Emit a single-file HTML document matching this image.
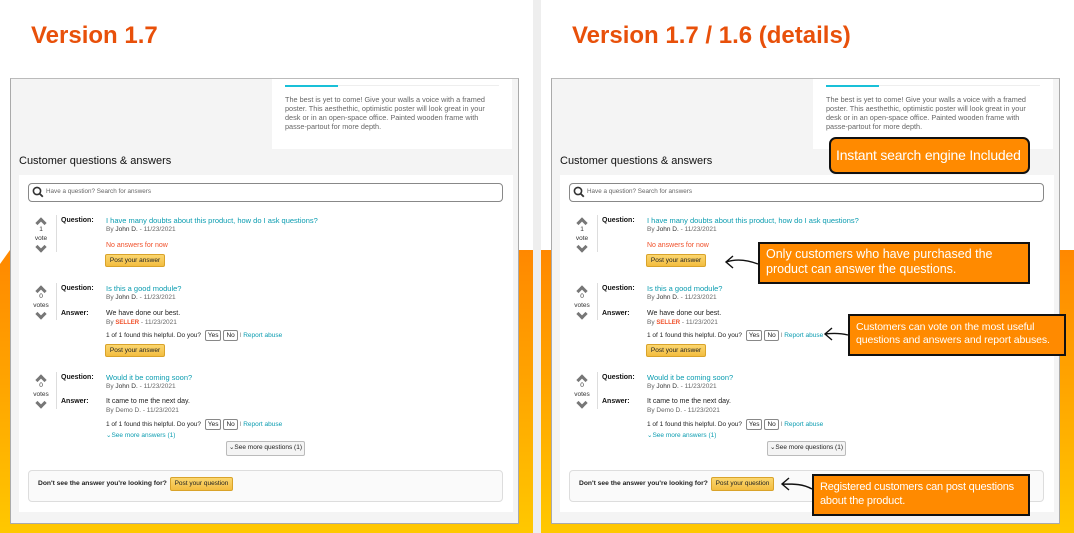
<!DOCTYPE html>
<html><head><meta charset="utf-8"><style>
*{margin:0;padding:0;box-sizing:border-box}
body{width:1074px;height:533px;position:relative;overflow:hidden;background:#fff;font-family:"Liberation Sans",sans-serif}
.a{position:absolute;white-space:nowrap}
.bg{position:absolute;top:250px;height:283px;background:linear-gradient(#ff8800,#ffa600 50%,#ffc800)}
.panel{position:absolute;top:0;left:0;width:533px;height:533px}
.t{font-size:7px;line-height:10px;color:#222}
.lab{font-size:7px;font-weight:bold;color:#111;line-height:10px}
.lnk{color:#0a9cb0;font-size:7.5px;line-height:10px}
.by{font-size:6.5px;color:#666;line-height:10px}
.btn{position:absolute;background:linear-gradient(#fbd66f,#f3bd40);border:1px solid #d9a32a;border-radius:2px;font-size:6.5px;color:#222;text-align:center;line-height:11px}
.yn{display:inline-block;border:1px solid #888;border-radius:2px;padding:0 2px;font-size:6.5px;line-height:9px;margin-left:2px;background:#fff}
.chev{position:absolute;width:8px;height:8px;border-left:3px solid #777;border-top:3px solid #777}
.vn{font-size:6.5px;color:#333;text-align:center;width:30px;line-height:9px}
.note{position:absolute;background:#ff8a00;border:2.5px solid #111;color:#fff;font-size:12px;line-height:15px;padding:3px 6px;white-space:nowrap;overflow:hidden}
</style></head><body>
<div class="bg" style="left:0;width:533px"></div>
<div class="bg" style="left:541px;width:533px"></div>
<div class="a" style="left:533px;top:0;width:8px;height:533px;background:#eee"></div>
<div class="a" style="left:0;top:250px;width:0;height:0;border-top:14px solid #fff;border-right:10px solid transparent"></div>

<div class="a" style="left:31px;top:22px;font-size:24px;font-weight:bold;color:#e8500a">Version 1.7</div>
<div class="a" style="left:572px;top:22px;font-size:24px;font-weight:bold;color:#e8500a">Version 1.7 / 1.6 (details)</div>

<div id="p1" class="panel">
<div class="a" style="left:10px;top:78px;width:509px;height:446px;background:#f4f4f4;border:1.5px solid #aaa;border-top:1.5px solid #bbb"></div>
<div class="a" style="left:272px;top:79px;width:240px;height:70px;background:#fff"></div>
<div class="a" style="left:285px;top:85px;width:214px;height:1px;background:#eee"></div>
<div class="a" style="left:285px;top:85px;width:53px;height:2px;background:#19c0d8"></div>
<div class="a" style="left:285px;top:95px;font-size:7.3px;line-height:9px;color:#666">The best is yet to come! Give your walls a voice with a framed<br>poster. This aesthethic, optimistic poster will look great in your<br>desk or in an open-space office. Painted wooden frame with<br>passe-partout for more depth.</div>
<div class="a" style="left:19px;top:155px;font-size:11px;color:#111">Customer questions &amp; answers</div>
<div class="a" style="left:19px;top:175px;width:494px;height:337px;background:#fff"></div>
<div class="a" style="left:28px;top:183px;width:475px;height:19px;border:1.5px solid #888;border-radius:4px"></div>
<svg class="a" style="left:32px;top:186px" width="12" height="12" viewBox="0 0 12 12"><circle cx="5" cy="5" r="3.6" fill="none" stroke="#333" stroke-width="1.6"/><path d="M7.6 7.6L10.8 10.8" stroke="#333" stroke-width="1.8"/></svg>
<div class="a" style="left:46px;top:187px;font-size:6.3px;color:#666;line-height:10px">Have a question? Search for answers</div>

<div class="chev" style="left:37px;top:219px;transform:rotate(45deg)"></div>
<div class="a vn" style="left:26px;top:225px">1</div>
<div class="a vn" style="left:26px;top:234px">vote</div>
<div class="chev" style="left:37px;top:243px;transform:rotate(225deg)"></div>
<div class="a" style="left:56px;top:215px;width:1px;height:37px;background:#ddd"></div>
<div class="a lab" style="left:61px;top:216px">Question:</div>
<div class="a lnk" style="left:106px;top:216px">I have many doubts about this product, how do I ask questions?</div>
<div class="a by" style="left:106px;top:225px">By <span style="color:#333">John D.</span> - 11/23/2021</div>
<div class="a" style="left:106px;top:241px;font-size:7px;color:#f0502a;line-height:10px">No answers for now</div>
<div class="btn" style="left:105px;top:254px;width:60px;height:13px">Post your answer</div>

<div class="chev" style="left:37px;top:287px;transform:rotate(45deg)"></div>
<div class="a vn" style="left:26px;top:292px">0</div>
<div class="a vn" style="left:26px;top:301px">votes</div>
<div class="chev" style="left:37px;top:310px;transform:rotate(225deg)"></div>
<div class="a" style="left:56px;top:283px;width:1px;height:37px;background:#ddd"></div>
<div class="a lab" style="left:61px;top:284px">Question:</div>
<div class="a lnk" style="left:106px;top:284px">Is this a good module?</div>
<div class="a by" style="left:106px;top:293px">By <span style="color:#333">John D.</span> - 11/23/2021</div>
<div class="a lab" style="left:61px;top:309px">Answer:</div>
<div class="a t" style="left:106px;top:309px">We have done our best.</div>
<div class="a by" style="left:106px;top:318px">By <b style="color:#f0502a;font-size:6px">SELLER</b> - 11/23/2021</div>
<div class="a t" style="left:106px;top:330px;font-size:6.5px">1 of 1 found this helpful. Do you? <span class="yn">Yes</span><span class="yn">No</span> <span style="color:#888">I</span> <span class="lnk" style="font-size:6.5px">Report abuse</span></div>
<div class="btn" style="left:105px;top:344px;width:60px;height:13px">Post your answer</div>

<div class="chev" style="left:37px;top:376px;transform:rotate(45deg)"></div>
<div class="a vn" style="left:26px;top:381px">0</div>
<div class="a vn" style="left:26px;top:390px">votes</div>
<div class="chev" style="left:37px;top:399px;transform:rotate(225deg)"></div>
<div class="a" style="left:56px;top:372px;width:1px;height:37px;background:#ddd"></div>
<div class="a lab" style="left:61px;top:373px">Question:</div>
<div class="a lnk" style="left:106px;top:373px">Would it be coming soon?</div>
<div class="a by" style="left:106px;top:382px">By <span style="color:#333">John D.</span> - 11/23/2021</div>
<div class="a lab" style="left:61px;top:397px">Answer:</div>
<div class="a t" style="left:106px;top:397px">It came to me the next day.</div>
<div class="a by" style="left:106px;top:406px">By Demo D. - 11/23/2021</div>
<div class="a t" style="left:106px;top:419px;font-size:6.5px">1 of 1 found this helpful. Do you? <span class="yn">Yes</span><span class="yn">No</span> <span style="color:#888">I</span> <span class="lnk" style="font-size:6.5px">Report abuse</span></div>
<div class="a lnk" style="left:106px;top:431px;font-size:6.5px">⌄See more answers (1)</div>
<div class="a" style="left:226px;top:441px;width:79px;height:15px;border:1.5px solid #bbb;border-radius:2px;background:#f4f4f4;font-size:6.5px;line-height:12px;text-align:center;color:#222">⌄See more questions (1)</div>

<div class="a" style="left:28px;top:470px;width:475px;height:32px;border:1px solid #ddd;border-radius:4px;background:#fafafa"></div>
<div class="a" style="left:38px;top:479px;font-size:6.7px;font-weight:bold;color:#222;line-height:10px">Don't see the answer you're looking for?</div>
<div class="btn" style="left:170px;top:477px;width:63px;height:14px;line-height:12px">Post your question</div>
</div>

<div class="panel" id="p2" style="left:541px"></div>

<div class="note" style="left:829px;top:137px;width:201px;height:37px;border-radius:7px;font-size:14px;letter-spacing:-0.2px;line-height:32px;padding:0 5px">Instant search engine Included</div>
<div class="note" style="left:758px;top:242px;width:272px;height:42px;font-size:12.5px">Only customers who have purchased the<br>product can answer the questions.</div>
<div class="note" style="left:848px;top:314px;width:218px;height:42px;font-size:10.5px;line-height:13px;padding-top:5px;letter-spacing:-0.1px">Customers can vote on the most useful<br>questions and answers and report abuses.</div>
<div class="note" style="left:812px;top:474px;width:218px;height:42px;font-size:11px;line-height:14px;padding-top:4px;letter-spacing:-0.2px">Registered customers can post questions<br>about the product.</div>
<svg class="a" style="left:0;top:0" width="1074" height="533"><g fill="none" stroke="#111" stroke-width="1.4"><path d="M758 264C745 259 735 259 726 262M733 256L726 262L733 268"/><path d="M848 335C840 333 833 333 825 334M832 328L825 334L832 340"/><path d="M812 489C803 484 795 484 782 484M789 478L782 484L789 490"/></g></svg>
<script>document.getElementById('p2').innerHTML=document.getElementById('p1').innerHTML;</script>
</body></html>
